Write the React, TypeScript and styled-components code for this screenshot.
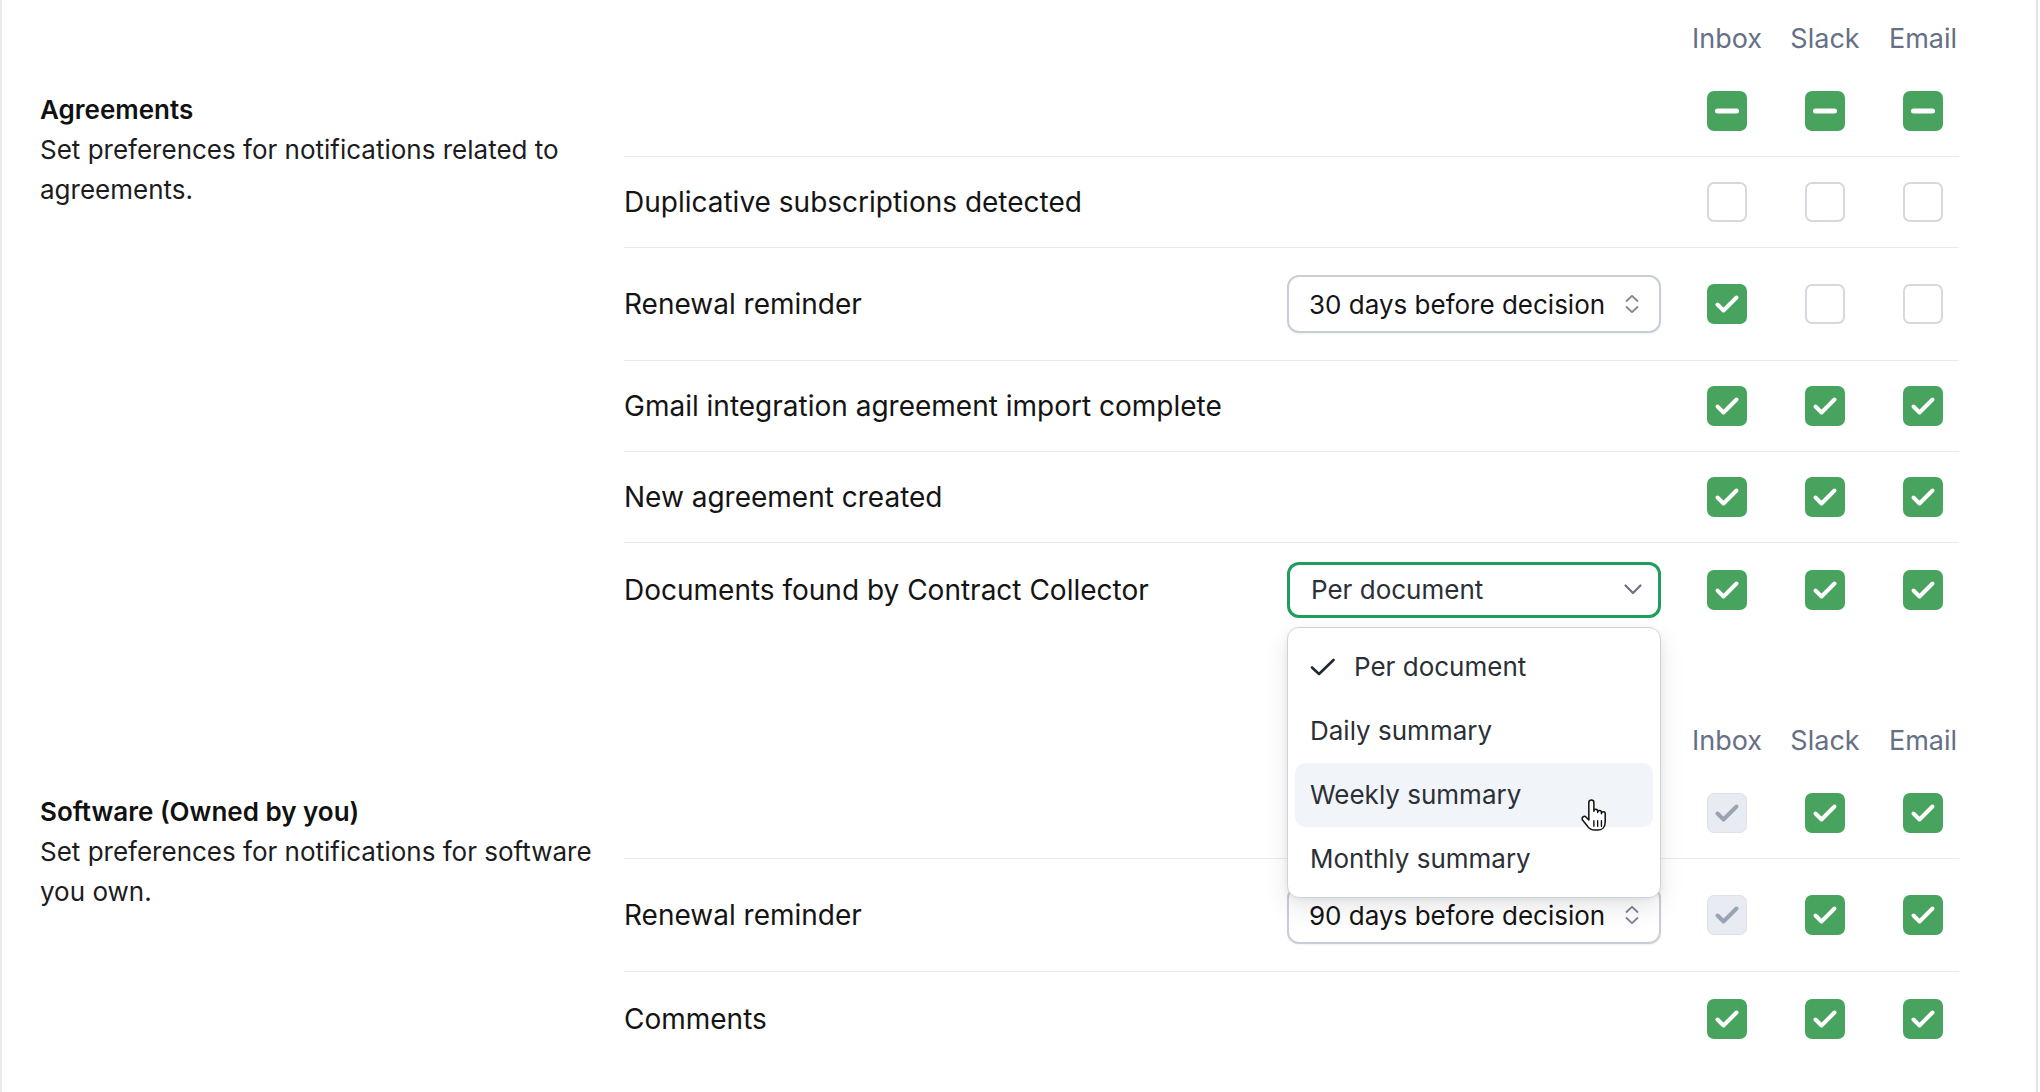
import React from "react";
import styled, { createGlobalStyle } from "styled-components";

type CheckState = "on" | "off" | "mixed" | "locked";

interface Control {
  kind: "days" | "frequency";
  value: string;
  open?: boolean;
}

interface PrefRow {
  label: string;
  control?: Control;
  checks: CheckState[];
}

interface Section {
  title: string;
  description: string;
  header: CheckState[];
  rows: PrefRow[];
}

const channels = ["Inbox", "Slack", "Email"];

const frequencyOptions = [
  "Per document",
  "Daily summary",
  "Weekly summary",
  "Monthly summary",
];

const sections: Section[] = [
  {
    title: "Agreements",
    description: "Set preferences for notifications related to agreements.",
    header: ["mixed", "mixed", "mixed"],
    rows: [
      { label: "Duplicative subscriptions detected", checks: ["off", "off", "off"] },
      {
        label: "Renewal reminder",
        control: { kind: "days", value: "30 days before decision" },
        checks: ["on", "off", "off"],
      },
      { label: "Gmail integration agreement import complete", checks: ["on", "on", "on"] },
      { label: "New agreement created", checks: ["on", "on", "on"] },
      {
        label: "Documents found by Contract Collector",
        control: { kind: "frequency", value: "Per document", open: true },
        checks: ["on", "on", "on"],
      },
    ],
  },
  {
    title: "Software (Owned by you)",
    description: "Set preferences for notifications for software you own.",
    header: ["locked", "on", "on"],
    rows: [
      {
        label: "Renewal reminder",
        control: { kind: "days", value: "90 days before decision" },
        checks: ["locked", "on", "on"],
      },
      { label: "Comments", checks: ["on", "on", "on"] },
    ],
  },
];

function CheckMark({ color }: { color: string }) {
  return (
    <svg width="40" height="40" viewBox="0 0 40 40" fill="none">
      <polyline
        points="10.5 20.5 16.5 26.5 29.5 13.5"
        stroke={color}
        strokeWidth="4"
        strokeLinecap="round"
        strokeLinejoin="round"
      />
    </svg>
  );
}

function Checkbox({ state }: { state: CheckState }) {
  return (
    <Box $state={state}>
      {state === "on" && <CheckMark color="#ffffff" />}
      {state === "locked" && <CheckMark color="#9aa3b1" />}
      {state === "mixed" && (
        <svg width="40" height="40" viewBox="0 0 40 40" fill="none">
          <line x1="10.5" y1="20" x2="29.5" y2="20" stroke="#fff" strokeWidth="5" strokeLinecap="round" />
        </svg>
      )}
    </Box>
  );
}

function UpDownIcon() {
  return (
    <svg width="16" height="20" viewBox="0 0 16 20" fill="none">
      <path d="M2.5 7 L8 1.8 L13.5 7" stroke="#7b8494" strokeWidth="1.8" strokeLinecap="round" strokeLinejoin="round" />
      <path d="M2.5 13 L8 18.2 L13.5 13" stroke="#7b8494" strokeWidth="1.8" strokeLinecap="round" strokeLinejoin="round" />
    </svg>
  );
}

function DownIcon() {
  return (
    <svg width="18" height="11" viewBox="0 0 18 11" fill="none">
      <path d="M1.5 1.5 L9 9 L16.5 1.5" stroke="#6b7280" strokeWidth="2.2" strokeLinecap="round" strokeLinejoin="round" />
    </svg>
  );
}

function HandCursor() {
  return (
    <Cursor width="31" height="34" viewBox="0 0 24 27" fill="none">
      <path
        d="M9.5 1.5 C10.6 1.5 11.5 2.4 11.5 3.5 V10.5 C11.5 9.7 12.2 9 13 9 C13.8 9 14.5 9.7 14.5 10.5 V11.5 C14.5 10.7 15.2 10 16 10 C16.8 10 17.5 10.7 17.5 11.5 V12.5 C17.5 11.7 18.2 11 19 11 C19.8 11 20.5 11.7 20.5 12.5 V19 C20.5 23 18 25.5 14.5 25.5 H12 C9.5 25.5 8 24.5 6.5 22.5 L2.5 17.5 C1.9 16.7 2.1 15.6 2.9 15 C3.7 14.4 4.8 14.6 5.4 15.3 L7.5 17.5 V3.5 C7.5 2.4 8.4 1.5 9.5 1.5 Z"
        fill="#ffffff"
        stroke="#111111"
        strokeWidth="1.2"
        strokeLinejoin="round"
      />
      <path d="M11.5 18 V22.5 M14.5 18 V22.5 M17.5 18 V22.5" stroke="#111111" strokeWidth="1.1" strokeLinecap="round" />
    </Cursor>
  );
}

function FrequencySelect({ value, open }: { value: string; open?: boolean }) {
  return (
    <SelectWrap>
      <SelectButton $focused={open}>
        <span>{value}</span>
        <DownIcon />
      </SelectButton>
      {open && (
        <Menu>
          {frequencyOptions.map((opt) => (
            <MenuItem key={opt} $active={opt === "Weekly summary"}>
              {opt === value && (
                <svg width="26" height="18" viewBox="0 0 26 18" fill="none">
                  <path d="M2 9.5 L9 16 L23.5 2" stroke="#1f2937" strokeWidth="2.6" strokeLinecap="round" strokeLinejoin="round" />
                </svg>
              )}
              {opt}
            </MenuItem>
          ))}
          <HandCursor />
        </Menu>
      )}
    </SelectWrap>
  );
}

export default function App() {
  return (
    <>
      <GlobalStyle />
      <Panel>
        {sections.map((section) => (
          <SectionGrid key={section.title}>
            <Info>
              <Title>{section.title}</Title>
              <Description>{section.description}</Description>
            </Info>
            <Table>
              <ChannelRow>
                {channels.map((c) => (
                  <Channel key={c}>{c}</Channel>
                ))}
              </ChannelRow>
              <Row>
                <RowLabel />
                <Checks>
                  {section.header.map((s, i) => (
                    <Cell key={i}>
                      <Checkbox state={s} />
                    </Cell>
                  ))}
                </Checks>
              </Row>
              {section.rows.map((row) => (
                <Row key={row.label}>
                  <RowLabel>{row.label}</RowLabel>
                  {row.control && (
                    <ControlSlot>
                      {row.control.kind === "days" ? (
                        <DaysSelect>
                          <span>{row.control.value}</span>
                          <UpDownIcon />
                        </DaysSelect>
                      ) : (
                        <FrequencySelect value={row.control.value} open={row.control.open} />
                      )}
                    </ControlSlot>
                  )}
                  <Checks>
                    {row.checks.map((s, i) => (
                      <Cell key={i}>
                        <Checkbox state={s} />
                      </Cell>
                    ))}
                  </Checks>
                </Row>
              ))}
            </Table>
          </SectionGrid>
        ))}
      </Panel>
    </>
  );
}

const GlobalStyle = createGlobalStyle`
  html, body {
    margin: 0;
    padding: 0;
    background: #ffffff;
  }
  body {
    font-family: Inter, "Noto Sans", sans-serif;
    color: #111827;
    -webkit-font-smoothing: antialiased;
  }
`;

const Panel = styled.div`
  box-sizing: border-box;
  width: 2038px;
  min-height: 1092px;
  border-left: 2px solid #e9ebef;
  border-right: 2px solid #e1e4e9;
  padding: 19px 77px 0 38px;
  display: flex;
  flex-direction: column;
  gap: 85px;
`;

const SectionGrid = styled.section`
  display: grid;
  grid-template-columns: 560px 1fr;
  column-gap: 24px;
`;

const Info = styled.div`
  padding-top: 71px;
`;

const Title = styled.div`
  font-size: 26px;
  line-height: 40px;
  font-weight: 600;
  color: #111111;
`;

const Description = styled.p`
  margin: 0;
  font-size: 26px;
  line-height: 40px;
  color: #1c1c1e;
`;

const Table = styled.div`
  display: flex;
  flex-direction: column;
`;

const ChannelRow = styled.div`
  display: flex;
  justify-content: flex-end;
  gap: 26px;
  height: 40px;
  margin-bottom: 7px;
`;

const Channel = styled.div`
  width: 72px;
  text-align: center;
  font-size: 27px;
  line-height: 40px;
  color: #667085;
`;

const Row = styled.div`
  display: flex;
  align-items: center;
  min-height: 90px;
  border-bottom: 1px solid #e7eaee;

  &:last-child {
    border-bottom: none;
    min-height: 93px;
  }
`;

const RowLabel = styled.div`
  flex: 1;
  font-size: 28px;
  line-height: 40px;
  color: #141414;
`;

const ControlSlot = styled.div`
  width: 374px;
  margin-right: 30px;
`;

const Checks = styled.div`
  display: flex;
  gap: 26px;
`;

const Cell = styled.div`
  width: 72px;
  display: flex;
  justify-content: center;
`;

const Box = styled.div<{ $state: CheckState }>`
  box-sizing: border-box;
  width: 40px;
  height: 40px;
  border-radius: 7px;
  display: flex;
  align-items: center;
  justify-content: center;
  background: ${(p) =>
    p.$state === "on" || p.$state === "mixed"
      ? "#47a35d"
      : p.$state === "locked"
      ? "#e8ecf2"
      : "#ffffff"};
  border: ${(p) =>
    p.$state === "off"
      ? "2px solid #d5d9df"
      : p.$state === "locked"
      ? "1.5px solid #dde2e9"
      : "none"};
  svg {
    flex-shrink: 0;
  }
`;

const DaysSelect = styled.div`
  box-sizing: border-box;
  height: 58px;
  margin: 27px 0;
  border: 2px solid #c9ced6;
  border-radius: 12px;
  padding: 0 19px 0 20px;
  display: flex;
  align-items: center;
  justify-content: space-between;
  font-size: 26px;
  white-space: nowrap;
  color: #141414;
  background: #ffffff;
  box-shadow: 0 1px 2px rgba(15, 23, 42, 0.06);
`;

const SelectWrap = styled.div`
  position: relative;
`;

const SelectButton = styled.div<{ $focused?: boolean }>`
  box-sizing: border-box;
  height: 56px;
  border: 3px solid ${(p) => (p.$focused ? "#1f9d5c" : "#c9ced6")};
  border-radius: 12px;
  padding: 0 16px 0 21px;
  display: flex;
  align-items: center;
  justify-content: space-between;
  font-size: 26px;
  white-space: nowrap;
  color: #2b2f36;
  background: #ffffff;
`;

const Menu = styled.div`
  position: absolute;
  top: 65px;
  left: 0;
  right: 0;
  z-index: 10;
  box-sizing: border-box;
  padding: 7px 7px 6px;
  background: #ffffff;
  border: 1.5px solid #cdd3dc;
  border-radius: 12px;
  box-shadow: 0 10px 24px rgba(15, 23, 42, 0.1), 0 2px 6px rgba(15, 23, 42, 0.06);
`;

const MenuItem = styled.div<{ $active?: boolean }>`
  height: 64px;
  display: flex;
  align-items: center;
  gap: 18px;
  padding: 0 16px 0 15px;
  border-radius: 10px;
  font-size: 26px;
  color: #2b2f36;
  background: ${(p) => (p.$active ? "#f1f5f9" : "transparent")};
`;

const Cursor = styled.svg`
  position: absolute;
  left: 291px;
  top: 170px;
`;
